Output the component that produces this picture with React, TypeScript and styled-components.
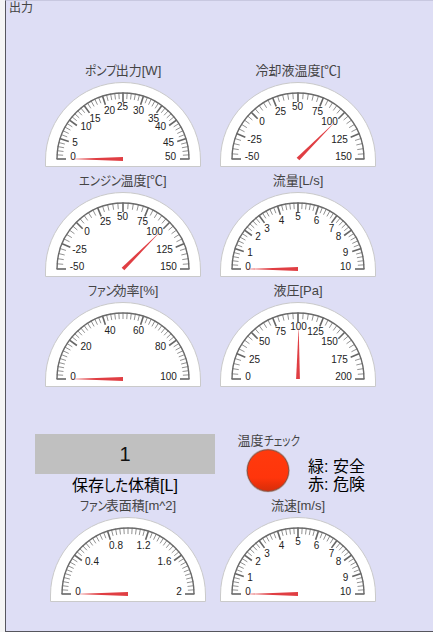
import React from 'react';
import styled, { createGlobalStyle } from 'styled-components';

const GlobalStyle = createGlobalStyle`
  body {
    margin: 0;
    background: #f5f5f5;
    overflow: hidden;
    font-family: "Liberation Sans", "Noto Sans CJK JP", sans-serif;
  }
`;

const Panel = styled.main`
  box-sizing: border-box;
  width: 440px;
  height: 632px;
  margin-left: 5px;
  border-left: 1px solid #56565e;
  border-bottom: 1px solid #56565e;
  border-top: 1px solid #c8c8e0;
  background: #dedef5;
`;

const PanelTitle = styled.h1`
  height: 61px;
  margin: 0;
  padding-left: 3px;
  font-size: 12px;
  font-weight: 400;
  line-height: 14px;
  color: #444;
`;

const GaugeRow = styled.div<{ $indent: number; $gap: number }>`
  display: flex;
  gap: ${(p) => p.$gap}px;
  height: 110px;
  padding-left: ${(p) => p.$indent}px;
`;

const GaugeCard = styled.section`
  width: 160px;
`;

const Caption = styled.div`
  display: flex;
  justify-content: center;
  height: 18px;
  line-height: 18px;
  font-size: 13px;
  color: #444;
  white-space: nowrap;
`;

const Kana = styled.span<{ $width: number; $scale: number }>`
  display: inline-block;
  width: ${(p) => p.$width}px;
  transform: scaleX(${(p) => p.$scale});
  transform-origin: left center;
  font-feature-settings: "palt";
  white-space: nowrap;
`;

const Dial = styled.svg`
  display: block;
  width: 160px;
  height: 92px;
  font-family: "Liberation Sans", sans-serif;
  font-size: 10px;
`;

const StatusRow = styled.div`
  display: flex;
  height: 105px;
  padding-left: 29px;
`;

const VolumeBlock = styled.section`
  width: 180px;
  padding-top: 42px;
`;

const VolumeValue = styled.div`
  height: 40px;
  line-height: 40px;
  background: #c0c0c0;
  font-size: 20px;
  text-align: center;
  color: #111;
`;

const VolumeLabel = styled.div`
  display: flex;
  justify-content: center;
  height: 23px;
  line-height: 23px;
  font-size: 16px;
  color: #000;
  white-space: nowrap;
`;

const LampBlock = styled.section`
  width: 65px;
  margin-left: 20px;
  padding-top: 40px;
`;

const Lamp = styled.svg`
  display: block;
  width: 46px;
  height: 46px;
  margin: -2px auto 0;
`;

const Legend = styled.div`
  margin-left: 8px;
  padding-top: 66px;
  font-size: 16px;
  line-height: 18px;
  color: #000;
  white-space: nowrap;
`;

type Label = [text: string, x: number, y: number];

interface GaugeData {
  kana?: string;
  kanaWidth?: number;
  kanaScale?: number;
  name: string;
  majors: number;
  minors: number;
  value: number;
  labels: Label[];
}

const eighths = (t: string[]): Label[] => [
  [t[0], -46, -2.5],
  [t[1], -43.5, -20],
  [t[2], -33.5, -37.5],
  [t[3], -17.5, -47.5],
  [t[4], -0.5, -52.5],
  [t[5], t[5].length > 2 ? 17.5 : 19.5, -47.5],
  [t[6], 31.5, -37.5],
  [t[7], 41.5, -20],
  [t[8], 45.5, -2.5],
];

const tenths: Label[] = [
  ['0', -50, -2.5], ['1', -48, -16.5], ['2', -40, -32.5], ['3', -31, -40.5],
  ['4', -16.5, -48.5], ['5', 0, -52.5], ['6', 18.5, -48.5], ['7', 33.5, -40.5],
  ['8', 40.5, -32.5], ['9', 47.5, -16.5], ['10', 47.5, -2.5],
];

const fifths = (t: string[]): Label[] => [
  [t[0], -50, -2.5], [t[1], -37, -32.5], [t[2], -13, -48.5],
  [t[3], 15.5, -48.5], [t[4], 37.5, -32.5],
  [t[5], t[5].length > 1 ? 45.5 : 51, -2.5],
];

const pump: GaugeData = {
  kana: 'ポンプ', kanaWidth: 31, kanaScale: 0.9, name: '出力[W]', majors: 10, minors: 5, value: 0,
  labels: [
    ['0', -50, -2.5], ['5', -48, -16.5], ['10', -37, -32.5], ['15', -28, -40.5],
    ['20', -13.5, -48.5], ['25', -0.5, -52.5], ['30', 15.5, -48.5], ['35', 30.5, -40.5],
    ['40', 37.5, -32.5], ['45', 45.5, -16.5], ['50', 47.5, -2.5],
  ],
};

const coolant: GaugeData = {
  name: '冷却液温度[℃]', majors: 8, minors: 5, value: 0.75,
  labels: eighths(['-50', '-25', '0', '25', '50', '75', '100', '125', '150']).map(
    (l, i) => (i === 2 ? ['0', -36, -37.5] : l) as Label),
};

const engine: GaugeData = { ...coolant, kana: 'エンジン', kanaWidth: 41, kanaScale: 0.87, name: '温度[℃]' };

const flow: GaugeData = { name: '流量[L/s]', majors: 10, minors: 5, value: 0, labels: tenths };

const fan: GaugeData = {
  kana: 'ファン', kanaWidth: 26, kanaScale: 0.82, name: '効率[%]', majors: 5, minors: 10, value: 0,
  labels: fifths(['0', '20', '40', '60', '80', '100']),
};

const pressure: GaugeData = {
  name: '液圧[Pa]', majors: 8, minors: 5, value: 0.504,
  labels: eighths(['0', '25', '50', '75', '100', '125', '150', '175', '200']).map(
    (l, i) => (i === 0 ? ['0', -50, -2.5] : i === 4 ? ['100', 0.5, -52.5] : l) as Label),
};

const surface: GaugeData = {
  kana: 'ファン', kanaWidth: 26, kanaScale: 0.82, name: '表面積[m^2]', majors: 5, minors: 10, value: 0,
  labels: fifths(['0', '0.4', '0.8', '1.2', '1.6', '2']).map(
    ([t, x, y]) => [t, t === '0.4' ? -36 : t === '0.8' ? -12 : t === '1.6' ? 36.5 : x, y] as Label),
};

const speed: GaugeData = { ...flow, name: '流速[m/s]' };

function Name({ kana, width = 0, scale = 1, children }: {
  kana?: string; width?: number; scale?: number; children?: React.ReactNode;
}) {
  return (
    <>
      {kana && <Kana $width={width} $scale={scale}>{kana}</Kana>}
      <span>{children}</span>
    </>
  );
}

function Gauge({ data }: { data: GaugeData }) {
  const steps = data.majors * data.minors;
  const ticks = Array.from({ length: steps + 1 }, (_, i) => {
    const major = i % data.minors === 0;
    const a = Math.PI * (1 - i / steps);
    const inner = major ? 57 : 60;
    return (
      <line
        key={i}
        x1={Math.cos(a) * 66.5}
        y1={-Math.sin(a) * 66.5}
        x2={Math.cos(a) * inner}
        y2={-Math.sin(a) * inner}
        stroke={major ? '#666' : '#858585'}
        strokeWidth={major ? 1.6 : 0.9}
      />
    );
  });
  return (
    <GaugeCard>
      <Caption>
        <Name kana={data.kana} width={data.kanaWidth} scale={data.kanaScale}>{data.name}</Name>
      </Caption>
      <Dial viewBox="-80 -79 160 92">
        <path d="M-77.5 7.5V1A77.5 77.5 0 0 1 77.5 1V7.5Z" fill="#fff" stroke="#cacaca" />
        {ticks}
        <path d="M-66 0A66 66 0 0 1 66 0" fill="none" stroke="#6a6a6a" strokeWidth="1.4" />
        {data.labels.map(([t, x, y]) => (
          <text key={t} x={x} y={y + 3.5} textAnchor="middle" fill="#222">{t}</text>
        ))}
        <path
          d="M-53 0L0 -1.9V1.9Z"
          fill="#e03e43"
          transform={`rotate(${data.value * 180})`}
        />
      </Dial>
    </GaugeCard>
  );
}

export default function App() {
  return (
    <>
      <GlobalStyle />
      <Panel>
        <PanelTitle>出力</PanelTitle>
        <GaugeRow $indent={37} $gap={15}><Gauge data={pump} /><Gauge data={coolant} /></GaugeRow>
        <GaugeRow $indent={37} $gap={15}><Gauge data={engine} /><Gauge data={flow} /></GaugeRow>
        <GaugeRow $indent={37} $gap={15}><Gauge data={fan} /><Gauge data={pressure} /></GaugeRow>
        <StatusRow>
          <VolumeBlock>
            <VolumeValue>1</VolumeValue>
            <VolumeLabel>
              <span>保存</span>
              <Name kana="した" width={24} scale={0.84}>体積[L]</Name>
            </VolumeLabel>
          </VolumeBlock>
          <LampBlock>
            <Caption>
              <span>温度</span>
              <Name kana="チェック" width={34} scale={0.81} />
            </Caption>
            <Lamp viewBox="0 0 46 46">
              <defs>
                <linearGradient id="lamp" x1="0" y1="0" x2="0" y2="1">
                  <stop offset="0" stopColor="#ff3a0d" />
                  <stop offset="0.68" stopColor="#ff350b" />
                  <stop offset="0.85" stopColor="#e93009" />
                  <stop offset="1" stopColor="#d62e0c" />
                </linearGradient>
              </defs>
              <circle cx="23" cy="22.5" r="21.8" fill="#b9a9a6" />
              <circle cx="23" cy="22.5" r="20.7" fill="url(#lamp)" stroke="#8a4a3c" strokeWidth="0.9" />
            </Lamp>
          </LampBlock>
          <Legend>
            <div>緑: 安全</div>
            <div>赤: 危険</div>
          </Legend>
        </StatusRow>
        <GaugeRow $indent={42} $gap={10}><Gauge data={surface} /><Gauge data={speed} /></GaugeRow>
      </Panel>
    </>
  );
}
